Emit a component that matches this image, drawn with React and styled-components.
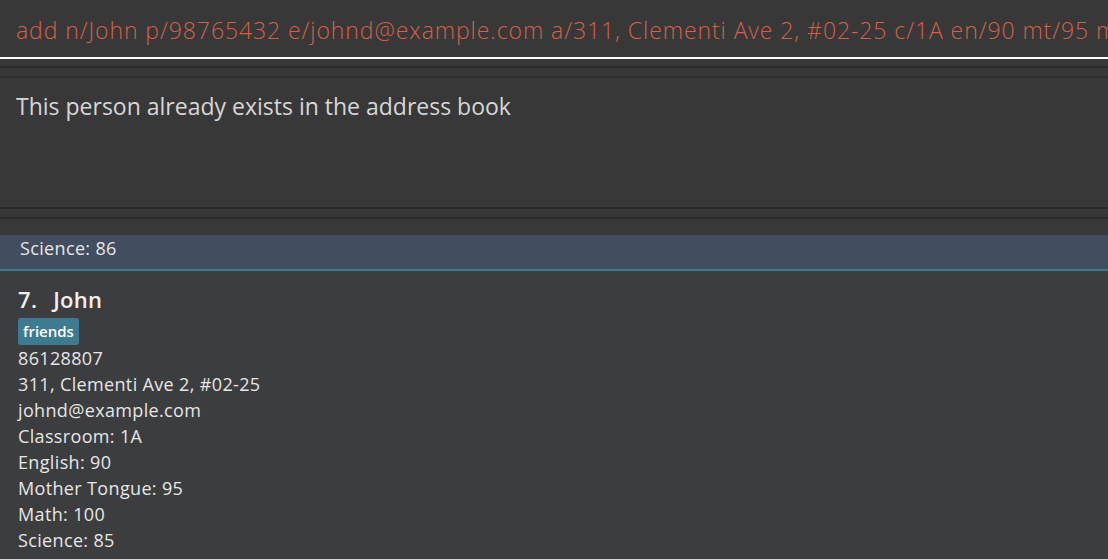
import React from "react"
import styled, { createGlobalStyle } from "styled-components"

const GlobalStyle = createGlobalStyle`
    html, body {
        margin: 0;
        padding: 0;
        background: #383838;
        overflow: hidden;
    }

    body {
        font-family: "Open Sans", "Noto Sans", sans-serif;
    }
`

const Window = styled.div`
    display: flex;
    flex-direction: column;
    width: 1108px;
    height: 559px;
    background: #383838;
    overflow: hidden;
`

const CommandBox = styled.div`
    flex: none;
    height: 59px;
    box-sizing: border-box;
    border-bottom: 2px solid #ffffff;
    padding: 15px 0 0 16px;
    overflow: hidden;
`

const CommandText = styled.div`
    color: #d5604a;
    font-size: 23px;
    font-weight: 300;
    letter-spacing: 0.92px;
    white-space: nowrap;
    line-height: 31px;
`

const Divider = styled.div`
    flex: none;
    height: ${(p) => p.size}px;
    border-bottom: 2px solid #2b2b2b;
`

const ResultBox = styled.div`
    flex: none;
    height: 133px;
    margin-top: 8px;
    border-top: 2px solid #2d2d2d;
    border-bottom: 2px solid #2b2b2b;
    padding: 12px 16px 0;
    color: #d7d7d7;
    font-size: 23px;
    box-sizing: border-box;
`

const Gap = styled.div`
    flex: none;
    height: 16px;
`

const List = styled.div`
    flex: 1;
    background: #3c3d3f;
    overflow: hidden;
`

const Cell = styled.div`
    background: ${(p) => (p.selected ? "#424d5f" : "transparent")};
    border-bottom: ${(p) => (p.selected ? "2px solid #3e7b91" : "none")};
    padding: ${(p) => (p.selected ? "0 18px 0 20px" : "13px 18px 8px")};
    height: ${(p) => (p.selected ? "34px" : "auto")};
    color: #e6e6e6;
    display: flex;
    flex-direction: column;
`

const Name = styled.div`
    display: flex;
    font-size: 22px;
    font-weight: 600;
    color: #f0f0f0;
    height: 30px;
    line-height: 30px;
    letter-spacing: 0.3px;
    white-space: nowrap;
`

const Index = styled.span`
    margin-right: 16px;
`

const Tags = styled.div`
    display: flex;
    gap: 6px;
    margin-top: 4px;
    height: 27px;
`

const Tag = styled.span`
    background: #3e7b91;
    color: #ffffff;
    font-size: 15px;
    font-weight: 600;
    border-radius: 3px;
    padding: 0 5px;
    line-height: 27px;
`

const Field = styled.div`
    font-size: 18px;
    letter-spacing: 0.35px;
    line-height: 26px;
    white-space: nowrap;
`

const person = {
    index: 7,
    name: "John",
    tags: ["friends"],
    fields: [
        "86128807",
        "311, Clementi Ave 2, #02-25",
        "johnd@example.com",
        "Classroom: 1A",
        "English: 90",
        "Mother Tongue: 95",
        "Math: 100",
        "Science: 85",
    ],
}

const App = () => (
    <>
        <GlobalStyle />
        <Window>
            <CommandBox>
                <CommandText>
                    add n/John p/98765432 e/johnd@example.com a/311, Clementi Ave 2, #02-25 c/1A en/90 mt/95 ma/100 s/85 t/friends
                </CommandText>
            </CommandBox>
            <Divider size={7} />
            <ResultBox>This person already exists in the address book</ResultBox>
            <Divider size={8} />
            <Gap />
            <List>
                <Cell selected>
                    <Field>Science: 86</Field>
                </Cell>
                <Cell>
                    <Name>
                        <Index>{person.index}.</Index>
                        {person.name}
                    </Name>
                    <Tags>
                        {person.tags.map((t) => (
                            <Tag key={t}>{t}</Tag>
                        ))}
                    </Tags>
                    {person.fields.map((f) => (
                        <Field key={f}>{f}</Field>
                    ))}
                </Cell>
            </List>
        </Window>
    </>
)

export default App
